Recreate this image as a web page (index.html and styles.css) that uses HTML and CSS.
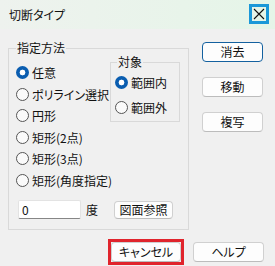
FILE: index.html
```html
<!DOCTYPE html>
<html>
<head>
    <link rel="stylesheet" href="styles.css">
</head>
<body>
    <div class="window">
        <div class="titlebar">
            <span class="title">切断タイプ</span>
            <span class="close">
                <svg width="12" height="12" viewBox="0 0 12 12">
                    <path d="M1 1 L11 11 M11 1 L1 11" stroke="#111" stroke-width="1.1" fill="none"/>
                </svg>
            </span>
        </div>

        <div class="content">
            <fieldset class="group method">
                <legend>指定方法</legend>
                <div class="method-top">
                    <div class="options">
                        <label class="option"><span class="radio checked"></span>任意</label>
                        <label class="option"><span class="radio"></span>ポリライン選択</label>
                        <label class="option"><span class="radio"></span>円形</label>
                        <label class="option"><span class="radio"></span>矩形(2点)</label>
                        <label class="option"><span class="radio"></span>矩形(3点)</label>
                        <label class="option"><span class="radio"></span>矩形(角度指定)</label>
                    </div>
                    <fieldset class="group target">
                        <legend>対象</legend>
                        <label class="option tall"><span class="radio checked"></span>範囲内</label>
                        <label class="option tall"><span class="radio"></span>範囲外</label>
                    </fieldset>
                </div>
                <div class="angle-row">
                    <input class="angle" type="text" value="0">
                    <span class="unit">度</span>
                    <button class="btn ref">図面参照</button>
                </div>
            </fieldset>

            <div class="actions">
                <button class="btn side default">消去</button>
                <button class="btn side">移動</button>
                <button class="btn side">複写</button>
            </div>
        </div>

        <div class="footer">
            <span class="mark"><button class="btn cancel">キャンセル</button></span>
            <button class="btn help">ヘルプ</button>
        </div>
    </div>
</body>
</html>
```

FILE: styles.css
```css
body {
    margin: 0;
    background-color: #f0f0f0;
    font-family: "Noto Sans CJK JP", "Noto Sans", sans-serif;
    font-size: 12px;
    color: #111;
    font-feature-settings: "palt";
}
.window {
    width: 275px;
    height: 266px;
    overflow: hidden;
}
.titlebar {
    height: 29px;
    display: flex;
    align-items: center;
    justify-content: space-between;
    padding: 0 6px 0 9px;
    background: linear-gradient(90deg, #eef2ee, #e5f5e8);
}
.title {
    line-height: 16px;
}
.close {
    width: 20px;
    height: 20px;
    box-sizing: border-box;
    border: 3px solid #1a98d8;
    display: flex;
    align-items: center;
    justify-content: center;
    margin-top: -1px;
}
.close svg {
    display: block;
}
.content {
    display: flex;
    padding: 11px 0 0 8px;
}
.group {
    margin: 0;
    border: 1px solid #d9d9d9;
    box-sizing: border-box;
}
.group legend {
    padding: 0 1px;
    line-height: 16px;
}
.method {
    width: 181px;
    height: 190px;
    padding: 0 0 0 7px;
}
.method-top {
    display: flex;
}
.options {
    width: 94px;
    padding-top: 6px;
}
.option {
    display: flex;
    align-items: center;
    height: 21.5px;
    white-space: nowrap;
}
.option.tall {
    height: 25px;
}
.radio {
    width: 13px;
    height: 13px;
    box-sizing: border-box;
    border: 1px solid #555;
    border-radius: 50%;
    background: #fafafa;
    margin-right: 3px;
    flex-shrink: 0;
}
.radio.checked {
    border: none;
    background: radial-gradient(circle, #fff 0 2.6px, #0a5db0 3.2px);
}
.target {
    width: 70px;
    height: 68px;
    margin-top: -2px;
    padding: 0 0 0 4px;
}
.target legend {
    margin-left: 2px;
}
.angle-row {
    display: flex;
    align-items: center;
    margin-top: 9px;
}
.angle {
    width: 63px;
    height: 19px;
    box-sizing: border-box;
    margin: 0 0 0 2px;
    padding: 0 3px;
    border: 1px solid #e3e3e3;
    border-bottom-color: #868686;
    border-radius: 2px;
    background: #fff;
    font: inherit;
    color: #111;
    outline: none;
}
.unit {
    margin-left: 5px;
}
.btn {
    font: inherit;
    color: #111;
    background: #fdfdfd;
    border: 1px solid #d0d0d0;
    border-bottom-color: #bcbcbc;
    border-radius: 4px;
    box-sizing: border-box;
    padding: 0;
    line-height: 16px;
}
.ref {
    width: 59px;
    height: 18px;
    margin-left: 16px;
}
.actions {
    display: flex;
    flex-direction: column;
    gap: 15px;
    margin: 2px 0 0 13px;
}
.side {
    width: 61px;
    height: 20px;
}
.default {
    border: 1px solid #14619f;
}
.footer {
    display: flex;
    justify-content: flex-end;
    align-items: center;
    gap: 9px;
    margin-top: 9px;
    padding-right: 11px;
}
.mark {
    display: flex;
    border: 3px solid #e0242c;
}
.cancel {
    width: 70px;
    height: 20px;
}
.help {
    width: 71px;
    height: 20px;
}
```
